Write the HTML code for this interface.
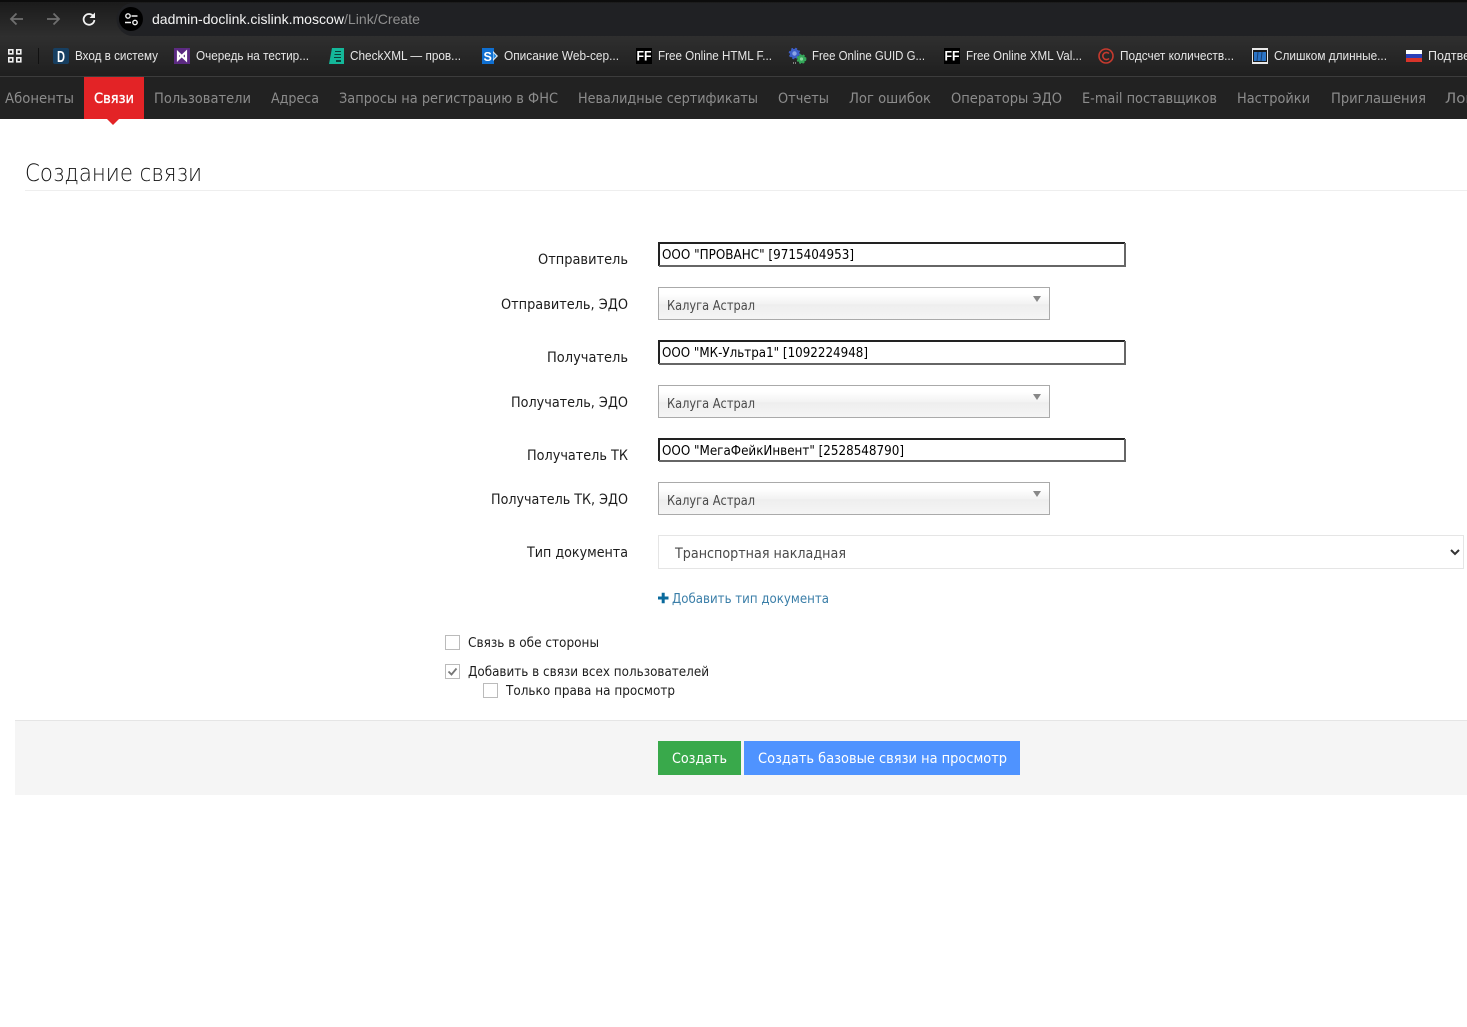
<!DOCTYPE html>
<html lang="ru">
<head>
<meta charset="utf-8">
<title>Создание связи</title>
<style>
html,body{margin:0;padding:0;width:1467px;height:1027px;overflow:hidden;background:#fff}
svg{display:block}
.c{font-family:"Liberation Sans",sans-serif}
.o{font-family:"DejaVu Sans","Liberation Sans",sans-serif}
.bm{font-size:12.500px;fill:#e6e6e6}
.nav{font-size:14.300px;fill:#8c8c8c}
.lb{font-size:14.200px;fill:#1c1c1c}
.in{font-size:13.300px;fill:#000}
.sl{font-size:13px;fill:#4a4a4a}
.ck{font-size:13px;fill:#1c1c1c}
.box{fill:#fff;stroke:#bbb;stroke-width:1}
</style>
</head>
<body>
<svg width="1467" height="1027" viewBox="0 0 1467 1027" xmlns="http://www.w3.org/2000/svg">
<defs>
<linearGradient id="tb" x1="0" y1="0" x2="0" y2="1"><stop offset="0" stop-color="#1b1b1b"/><stop offset="1" stop-color="#2e2e2e"/></linearGradient>
<linearGradient id="bb" x1="0" y1="0" x2="0" y2="1"><stop offset="0" stop-color="#2f2f2f"/><stop offset="1" stop-color="#1f1f1f"/></linearGradient>
<linearGradient id="ch" x1="0" y1="0" x2="0" y2="1"><stop offset="0.2" stop-color="#fff"/><stop offset="0.5" stop-color="#f3f3f3"/><stop offset="0.54" stop-color="#eee"/><stop offset="1" stop-color="#f5f5f5"/></linearGradient>
</defs>

<!-- browser toolbar -->
<rect width="1467" height="2" fill="#0c0c0c"/>
<rect y="2" width="1467" height="34" fill="url(#tb)"/>
<rect y="36" width="1467" height="40" fill="url(#bb)"/>
<rect y="76" width="1467" height="1" fill="#3c3c3c"/>
<path d="M133 3H1467V36H133a16.500 16.500 0 0 1 0-33z" fill="#202124"/>
<path d="M23 19H11.500M16.500 13.500L11 19l5.500 5.500" fill="none" stroke="#6f6f6f" stroke-width="1.800"/>
<path d="M47 19H58.500M53.500 13.500L59 19l-5.500 5.500" fill="none" stroke="#6f6f6f" stroke-width="1.800"/>
<path d="M93.600 16.500A5.400 5.400 0 1 0 94.400 20" fill="none" stroke="#f2f2f2" stroke-width="1.800"/>
<path d="M95 12.500V18H89.500z" fill="#f2f2f2"/>
<circle cx="131" cy="19" r="12" fill="#000"/>
<path d="M131.500 16h6M125 22.500h6" stroke="#eee" stroke-width="1.500" fill="none"/>
<circle cx="128" cy="16" r="2.200" fill="none" stroke="#eee" stroke-width="1.400"/>
<circle cx="135" cy="22.500" r="2.200" fill="none" stroke="#eee" stroke-width="1.400"/>
<text class="c" x="152" y="24" font-size="14" fill="#f4f4f4" textLength="192" lengthAdjust="spacingAndGlyphs">dadmin-doclink.cislink.moscow</text>
<text class="c" x="344" y="24" font-size="14" fill="#8f8f8f" textLength="76" lengthAdjust="spacingAndGlyphs">/Link/Create</text>

<!-- bookmarks -->
<g fill="none" stroke="#f0f0f0" stroke-width="1.600">
<rect x="8.800" y="49.800" width="4" height="4"/><rect x="16.800" y="49.800" width="4" height="4"/>
<rect x="8.800" y="57.800" width="4" height="4"/><rect x="16.800" y="57.800" width="4" height="4"/>
</g>
<rect x="38" y="48" width="1" height="16" fill="#111"/>

<rect x="53" y="48" width="16" height="16" rx="2" fill="#173f61"/>
<text class="c" x="61" y="62" font-size="16" font-weight="700" fill="#fff" text-anchor="middle" textLength="8" lengthAdjust="spacingAndGlyphs">D</text>
<text class="c bm" x="75" y="60" textLength="83" lengthAdjust="spacingAndGlyphs">Вход в систему</text>

<rect x="174" y="48" width="16" height="16" fill="#5c2a82"/>
<path d="M178 52.500L186 60V52L178 59.500z" fill="none" stroke="#fff" stroke-width="2.200"/>
<text class="c bm" x="196" y="60" textLength="113" lengthAdjust="spacingAndGlyphs">Очередь на тестир...</text>

<path d="M332 48h12v16h-15z" fill="#14b89a"/>
<path d="M335 51.500h6M334.500 54.500h6.500M334 57.500h7" stroke="#0b3f38" stroke-width="1"/>
<path d="M336 60h5v2h-5z" fill="#0b3f38"/>
<text class="c bm" x="350" y="60" textLength="111" lengthAdjust="spacingAndGlyphs">CheckXML — пров...</text>

<path d="M482 48h12v16h-12z" fill="#0f6fd1"/>
<path d="M493 51l5 5-5 5z" fill="#dfe8f0"/>
<path d="M493.500 53l3 3-3 3z" fill="#1f88e0"/>
<text class="c" x="483.500" y="61" font-size="12.500" font-weight="700" fill="#fff">S</text>
<text class="c bm" x="504" y="60" textLength="115" lengthAdjust="spacingAndGlyphs">Описание Web-сер...</text>

<rect x="636" y="48" width="16" height="16" fill="#000"/>
<text class="c" x="636.500" y="60.500" font-size="14" font-weight="700" fill="#fff" textLength="15" lengthAdjust="spacingAndGlyphs">FF</text>
<text class="c bm" x="658" y="60" textLength="114" lengthAdjust="spacingAndGlyphs">Free Online HTML F...</text>

<circle cx="794.500" cy="53.500" r="3.500" fill="#8aa4e8" stroke="#3d5fc8" stroke-width="2.600"/>
<circle cx="794.500" cy="53.500" r="5" fill="none" stroke="#3d5fc8" stroke-width="1.600" stroke-dasharray="2 2"/>
<circle cx="801.500" cy="59" r="2.800" fill="#8ad8a0" stroke="#35a85a" stroke-width="2.400"/>
<circle cx="801.500" cy="59" r="4.200" fill="none" stroke="#35a85a" stroke-width="1.400" stroke-dasharray="2 1.500"/>
<rect x="793" y="62.500" width="1" height="1" fill="#ddd"/><rect x="795" y="62.500" width="1" height="1" fill="#ddd"/>
<text class="c bm" x="812" y="60" textLength="113" lengthAdjust="spacingAndGlyphs">Free Online GUID G...</text>

<rect x="944" y="48" width="16" height="16" fill="#000"/>
<text class="c" x="944.500" y="60.500" font-size="14" font-weight="700" fill="#fff" textLength="15" lengthAdjust="spacingAndGlyphs">FF</text>
<text class="c bm" x="966" y="60" textLength="116" lengthAdjust="spacingAndGlyphs">Free Online XML Val...</text>

<circle cx="1106" cy="56" r="7" fill="none" stroke="#c63a2e" stroke-width="1.600"/>
<path d="M1109 53.500a3.600 3.600 0 1 0 0 5" fill="none" stroke="#c63a2e" stroke-width="1.600"/>
<text class="c bm" x="1120" y="60" textLength="114" lengthAdjust="spacingAndGlyphs">Подсчет количеств...</text>

<rect x="1252" y="48" width="16" height="16" fill="#e8e8e8"/>
<rect x="1253" y="50" width="14" height="12" fill="#1a1a1a"/>
<rect x="1254" y="52" width="12" height="9" fill="#2c74c4"/>
<path d="M1258 52l-1 9M1262 52l-1 9" stroke="#173f75" stroke-width="1"/>
<text class="c bm" x="1274" y="60" textLength="113" lengthAdjust="spacingAndGlyphs">Слишком длинные...</text>

<rect x="1406" y="50" width="16" height="4" fill="#fff"/>
<rect x="1406" y="54" width="16" height="4" fill="#2b3fb8"/>
<rect x="1406" y="58" width="16" height="4" fill="#d8342a"/>
<text class="c bm" x="1428" y="60" textLength="42" lengthAdjust="spacingAndGlyphs">Подтве</text>

<!-- site nav -->
<rect y="77" width="1467" height="42" fill="#222"/>
<rect x="84" y="77" width="60" height="42" fill="#e32326"/>
<path d="M107 119h12l-6 6z" fill="#e32326"/>
<g class="o nav">
<text x="5" y="103" textLength="69" lengthAdjust="spacingAndGlyphs">Абоненты</text>
<text x="154" y="103" textLength="97" lengthAdjust="spacingAndGlyphs">Пользователи</text>
<text x="271" y="103" textLength="48" lengthAdjust="spacingAndGlyphs">Адреса</text>
<text x="339" y="103" textLength="219" lengthAdjust="spacingAndGlyphs">Запросы на регистрацию в ФНС</text>
<text x="578" y="103" textLength="180" lengthAdjust="spacingAndGlyphs">Невалидные сертификаты</text>
<text x="778" y="103" textLength="51" lengthAdjust="spacingAndGlyphs">Отчеты</text>
<text x="849" y="103" textLength="82" lengthAdjust="spacingAndGlyphs">Лог ошибок</text>
<text x="951" y="103" textLength="111" lengthAdjust="spacingAndGlyphs">Операторы ЭДО</text>
<text x="1082" y="103" textLength="135" lengthAdjust="spacingAndGlyphs">E-mail поставщиков</text>
<text x="1237" y="103" textLength="73" lengthAdjust="spacingAndGlyphs">Настройки</text>
<text x="1331" y="103" textLength="95" lengthAdjust="spacingAndGlyphs">Приглашения</text>
<text x="1445" y="103" textLength="38" lengthAdjust="spacingAndGlyphs">Логи</text>
</g>
<text class="o" x="94" y="103" font-size="14.300" fill="#fff" stroke="#fff" stroke-width=".35" textLength="40" lengthAdjust="spacingAndGlyphs">Связи</text>

<!-- title -->
<text x="25" y="181" font-family="'DejaVu Sans','Liberation Sans',sans-serif" font-size="24" font-weight="200" fill="#111" textLength="177" lengthAdjust="spacingAndGlyphs">Создание связи</text>
<rect x="25" y="190" width="1442" height="1" fill="#eee"/>

<!-- labels -->
<g class="o lb">
<text x="538" y="264" textLength="90" lengthAdjust="spacingAndGlyphs">Отправитель</text>
<text x="501" y="309" textLength="127" lengthAdjust="spacingAndGlyphs">Отправитель, ЭДО</text>
<text x="547" y="362" textLength="81" lengthAdjust="spacingAndGlyphs">Получатель</text>
<text x="511" y="407" textLength="117" lengthAdjust="spacingAndGlyphs">Получатель, ЭДО</text>
<text x="527" y="460" textLength="101" lengthAdjust="spacingAndGlyphs">Получатель ТК</text>
<text x="491" y="504" textLength="137" lengthAdjust="spacingAndGlyphs">Получатель ТК, ЭДО</text>
<text x="527" y="557" textLength="101" lengthAdjust="spacingAndGlyphs">Тип документа</text>
</g>

<!-- inputs -->
<g>
<path d="M658 242h468v25h-468z" fill="#fff"/>
<path d="M659 266v-23h466" fill="none" stroke="#222" stroke-width="2"/>
<path d="M1125 243v23h-466" fill="none" stroke="#666" stroke-width="2"/>
<path d="M658 340h468v25h-468z" fill="#fff"/>
<path d="M659 364v-23h466" fill="none" stroke="#222" stroke-width="2"/>
<path d="M1125 341v23h-466" fill="none" stroke="#666" stroke-width="2"/>
<path d="M658 438h468v24h-468z" fill="#fff"/>
<path d="M659 461v-22h466" fill="none" stroke="#222" stroke-width="2"/>
<path d="M1125 439v22h-466" fill="none" stroke="#666" stroke-width="2"/>
</g>
<g class="o in">
<text x="662" y="259" textLength="192" lengthAdjust="spacingAndGlyphs">ООО "ПРОВАНС" [9715404953]</text>
<text x="662" y="357" textLength="206" lengthAdjust="spacingAndGlyphs">ООО "МК-Ультра1" [1092224948]</text>
<text x="662" y="455" textLength="242" lengthAdjust="spacingAndGlyphs">ООО "МегаФейкИнвент" [2528548790]</text>
</g>

<!-- chosen selects -->
<g stroke="#aaa" fill="url(#ch)">
<rect x="658.500" y="287.500" width="391" height="32"/>
<rect x="658.500" y="385.500" width="391" height="32"/>
<rect x="658.500" y="482.500" width="391" height="32"/>
</g>
<g fill="#888">
<path d="M1033 296h8l-4 6z"/><path d="M1033 394h8l-4 6z"/><path d="M1033 491h8l-4 6z"/>
</g>
<g class="o sl">
<text x="667" y="310" textLength="88" lengthAdjust="spacingAndGlyphs">Калуга Астрал</text>
<text x="667" y="408" textLength="88" lengthAdjust="spacingAndGlyphs">Калуга Астрал</text>
<text x="667" y="505" textLength="88" lengthAdjust="spacingAndGlyphs">Калуга Астрал</text>
</g>

<!-- document type select -->
<rect x="658.500" y="535.500" width="805" height="33" fill="#fff" stroke="#e5e5e5"/>
<text class="o" x="675" y="558" font-size="14.200" fill="#4a4a4a" textLength="171" lengthAdjust="spacingAndGlyphs">Транспортная накладная</text>
<path d="M1451 550l4 4 4-4" fill="none" stroke="#333" stroke-width="2"/>

<!-- add link -->
<path d="M658 598h10.500M663.200 592.800v10.500" stroke="#0a6a9c" stroke-width="3" fill="none"/>
<text class="o" x="672" y="603" font-size="13" fill="#3a7ea8" textLength="157" lengthAdjust="spacingAndGlyphs">Добавить тип документа</text>

<!-- checkboxes -->
<rect class="box" x="445.500" y="635.500" width="14" height="14"/>
<rect class="box" x="445.500" y="664.500" width="14" height="14"/>
<path d="M448.500 671.500l3 3 5-6" fill="none" stroke="#777" stroke-width="1.800"/>
<rect class="box" x="483.500" y="683.500" width="14" height="14"/>
<g class="o ck">
<text x="468" y="647" textLength="131" lengthAdjust="spacingAndGlyphs">Связь в обе стороны</text>
<text x="468" y="676" textLength="241" lengthAdjust="spacingAndGlyphs">Добавить в связи всех пользователей</text>
<text x="506" y="695" textLength="169" lengthAdjust="spacingAndGlyphs">Только права на просмотр</text>
</g>

<!-- footer -->
<rect x="15" y="720" width="1452" height="75" fill="#f5f5f5"/>
<rect x="15" y="720" width="1452" height="1" fill="#e5e5e5"/>
<rect x="658" y="741" width="83" height="34" fill="#39a94b"/>
<rect x="744" y="741" width="276" height="34" fill="#4f93ff"/>
<text class="o" x="672" y="763" font-size="14.200" fill="#fff" textLength="55" lengthAdjust="spacingAndGlyphs">Создать</text>
<text class="o" x="758" y="763" font-size="14.200" fill="#fff" textLength="249" lengthAdjust="spacingAndGlyphs">Создать базовые связи на просмотр</text>
</svg>
</body>
</html>
